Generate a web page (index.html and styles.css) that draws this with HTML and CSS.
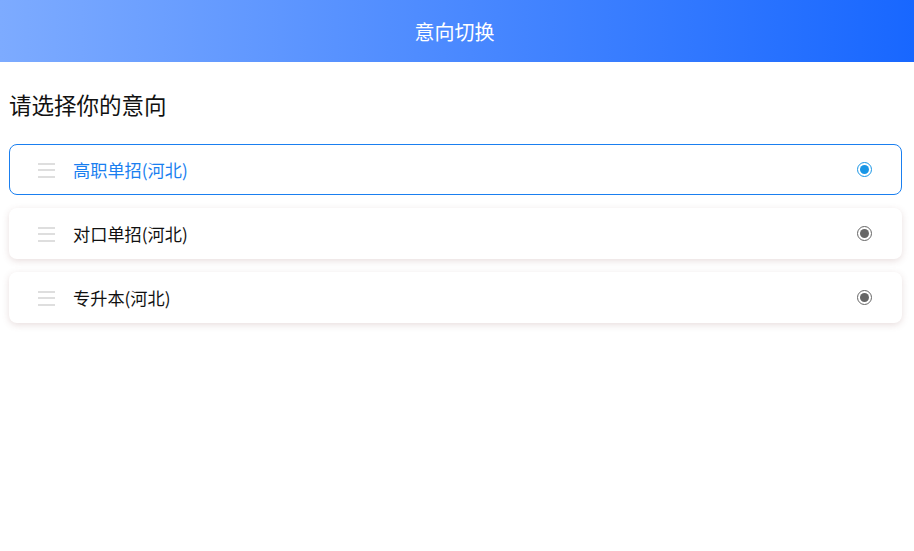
FILE: index.html
```html
<!DOCTYPE html>
<html lang="zh">
<head>
<meta charset="utf-8">
<title>意向切换</title>
<link rel="stylesheet" href="styles.css">
</head>
<body>
<header class="topbar">意向切换</header>
<main class="content">
  <h2 class="prompt">请选择你的意向</h2>
  <ul class="options">
    <li class="option selected">
      <span class="handle"><i></i><i></i><i></i></span>
      <span class="label">高职单招(河北)</span>
      <span class="radio"><span class="dot"></span></span>
    </li>
    <li class="option">
      <span class="handle"><i></i><i></i><i></i></span>
      <span class="label">对口单招(河北)</span>
      <span class="radio"><span class="dot"></span></span>
    </li>
    <li class="option">
      <span class="handle"><i></i><i></i><i></i></span>
      <span class="label">专升本(河北)</span>
      <span class="radio"><span class="dot"></span></span>
    </li>
  </ul>
</main>
</body>
</html>
```
FILE: styles.css
```css
* { box-sizing: border-box; }
html, body { margin: 0; padding: 0; background: #fff; }
body {
  font-family: "Noto Sans CJK SC", "Noto Sans", sans-serif;
  color: #111;
}
.topbar {
  height: 62px;
  display: flex;
  align-items: center;
  justify-content: center;
  padding-right: 5px;
  color: #fff;
  font-size: 20px;
  background: linear-gradient(to right, #7dabff, #1867ff);
}
.content {
  padding: 0 12px 12px 9px;
}
.prompt {
  margin: 27px 0 25px 0;
  font-size: 22.5px;
  font-weight: normal;
  line-height: 30px;
  height: 30px;
  color: #111;
}
.options {
  list-style: none;
  margin: 0;
  padding: 0;
  display: flex;
  flex-direction: column;
  gap: 13px;
}
.option {
  height: 51px;
  display: flex;
  align-items: center;
  padding: 0 29px 0 28px;
  border: 1px solid transparent;
  border-radius: 8px;
  background: #fff;
  box-shadow: 0 2px 7px rgba(140, 90, 90, 0.2);
}
.option.selected {
  border-color: #1a7ff0;
  box-shadow: none;
}
.handle {
  width: 17px;
  display: flex;
  flex-direction: column;
  gap: 4.5px;
  margin-right: 18px;
  padding-top: 1px;
}
.handle i {
  display: block;
  height: 2px;
  background: #dedede;
}
.label {
  flex: 1;
  font-size: 17.2px;
  color: #111;
}
.selected .label { color: #1a7ff0; }
.radio {
  width: 15px;
  height: 15px;
  border-radius: 50%;
  border: 1.5px solid #666;
  display: flex;
  align-items: center;
  justify-content: center;
  margin-top: -1px;
}
.radio .dot {
  width: 9px;
  height: 9px;
  border-radius: 50%;
  background: #666;
}
.selected .radio { border-color: #1996e6; }
.selected .radio .dot { background: #1996e6; }
```
